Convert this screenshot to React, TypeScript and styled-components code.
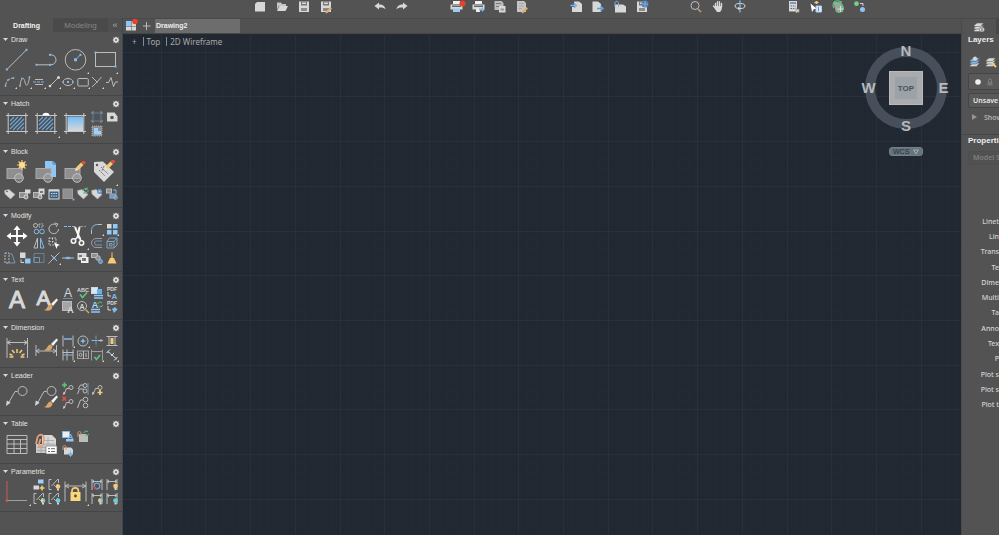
import React from "react";
import styled, { createGlobalStyle } from "styled-components";

const W = "#d8d8d8";
const L = "#bcbcbc";
const B = "#7fb9ee";
const Y = "#f6cb74";
const G = "#5cc47c";
const R = "#e2503c";
const P = "#535353";
const M = "#8f8f8f";

const GlobalStyle = createGlobalStyle`
  * { box-sizing: border-box; }
  html, body, #root { height: 100%; }
  body {
    margin: 0;
    overflow: hidden;
    background: #535353;
    color: #e4e4e4;
    font-family: "Liberation Sans", Arial, sans-serif;
    font-size: 7px;
  }
  button, input, select { font: inherit; color: inherit; }
`;

const Page = styled.div`
  display: flex;
  flex-direction: column;
  height: 100vh;
  min-height: 100%;
`;

const Toolbar = styled.header`
  flex: none;
  height: 18px;
  display: flex;
  justify-content: center;
  gap: 32px;
  padding-left: 120px;
  background: #535353;
`;

const ToolGroup = styled.div`
  display: flex;
`;

const BarButton = styled.button`
  width: 22px;
  height: 14px;
  padding: 0;
  border: 0;
  background: none;
  display: flex;
  justify-content: center;
`;

const Glyph = styled.svg<{ $w: number; $h?: number }>`
  flex: none;
  display: block;
  width: ${(p) => p.$w}px;
  height: ${(p) => p.$h ?? p.$w}px;
  overflow: visible;
  fill: none;
  stroke: ${L};
  stroke-width: 1;
  text { stroke: none; fill: ${W}; font-weight: bold; }
`;

const Body = styled.div`
  flex: 1;
  min-height: 0;
  display: flex;
`;

const Palette = styled.aside`
  flex: none;
  width: 123px;
  background: #535353;
  border-right: 1px solid #414850;
`;

const PaletteTabs = styled.div`
  display: grid;
  grid-template-columns: 53px 55px 1fr;
  height: 14px;
`;

const PaletteTab = styled.button<{ $active?: boolean }>`
  padding: 2px 0 0;
  border: 0;
  line-height: 12px;
  font-size: ${(p) => (p.$active ? 7 : 8)}px;
  font-weight: ${(p) => (p.$active ? "bold" : "normal")};
  color: ${(p) => (p.$active ? "#f4f4f4" : "#858585")};
  background: ${(p) => (p.$active ? "#535353" : "#4a4a4a")};
`;

const Collapse = styled.button`
  padding: 0;
  border: 0;
  font-size: 9px;
  line-height: 12px;
  color: #a8a8a8;
  background: #4f4f4f;
`;

const Section = styled.section`
  padding-bottom: 4px;
  border-bottom: 1px solid #454545;
`;

const SectionHead = styled.div`
  height: 14px;
  display: flex;
  align-items: center;
  gap: 3px;
  padding: 1px 2px 0 3px;
`;

const SectionTitle = styled.h2`
  flex: 1;
  margin: 0;
  font-size: 7px;
  line-height: 14px;
  font-weight: normal;
  color: #e2e2e2;
`;

const GearButton = styled.button`
  padding: 0;
  border: 0;
  background: none;
`;

const ToolGrid = styled.div<{ $rows: number }>`
  display: grid;
  grid-template-columns: repeat(8, 1fr);
  grid-template-rows: 14px 15px ${(p) => (p.$rows === 3 ? "16px" : "")};
  padding: 0 3px;
`;

const ToolButton = styled.button<{ $col: number; $row: number; $big: boolean }>`
  grid-column: ${(p) => p.$col} / span ${(p) => (p.$big ? 2 : 1)};
  grid-row: ${(p) => p.$row} / span ${(p) => (p.$big ? 2 : 1)};
  min-width: 0;
  min-height: 0;
  padding: 0;
  border: 0;
  background: none;
  display: flex;
  align-items: flex-start;
  justify-content: flex-start;
`;

const Workspace = styled.main`
  flex: 1;
  min-width: 0;
  display: flex;
  flex-direction: column;
`;

const DocTabs = styled.div`
  flex: none;
  height: 16px;
  display: flex;
  align-items: stretch;
  background: #515151;
  border-top: 1px solid #494949;
  border-bottom: 1px solid #454545;
`;

const DocButton = styled.button`
  width: 16px;
  padding: 0;
  border: 0;
  background: none;
  display: flex;
  align-items: center;
  justify-content: center;
`;

const DocTab = styled.button`
  width: 85px;
  padding: 0 1px;
  border: 0;
  text-align: left;
  font-size: 7px;
  font-weight: bold;
  line-height: 14px;
  color: #ececec;
  background: #6d6d6d;
`;

const Canvas = styled.div`
  position: relative;
  flex: 1;
  min-height: 0;
  overflow: hidden;
  background: #212831;
`;

const GridDrawing = styled.svg`
  position: absolute;
  inset: 0;
  width: 100%;
  height: 100%;
`;

const ViewLabels = styled.div`
  position: absolute;
  top: 3px;
  left: 9px;
  display: flex;
  align-items: center;
  gap: 6px;
  font-family: "Noto Sans", sans-serif;
  font-size: 8px;
  line-height: 10px;
  color: #a8a9ab;
`;

const ViewLabel = styled.button<{ $bar?: boolean }>`
  padding: 0 0 0 ${(p) => (p.$bar ? 3 : 0)}px;
  border: 0;
  border-left: ${(p) => (p.$bar ? "1px solid #858a90" : "0")};
  background: none;
  line-height: 9px;
`;

const ViewCube = styled.div`
  position: absolute;
  top: 4px;
  right: 11px;
  width: 88px;
  display: flex;
  flex-direction: column;
  align-items: center;
  gap: 8px;
`;

const WcsButton = styled.button`
  width: 34px;
  height: 9px;
  padding: 0 3px;
  border: 1px solid #71808b;
  border-radius: 3px;
  background: #66737d;
  color: #262e36;
  font-size: 7px;
  line-height: 7px;
  display: flex;
  align-items: center;
  justify-content: space-between;
`;

const Inspector = styled.aside`
  flex: none;
  width: 38px;
  overflow: hidden;
  background: #535353;
  border-left: 1px solid #474b50;
  border-top: 1px solid #484848;
  font-family: "Noto Sans", sans-serif;
  font-size: 7px;
  white-space: nowrap;
`;

const InspectorTabs = styled.div`
  height: 15px;
  display: flex;
  background: #484848;
`;

const InspectorTab = styled.button`
  width: 34px;
  padding: 0;
  border: 0;
  background: #535353;
  display: flex;
  align-items: center;
  justify-content: center;
`;

const PanelTitle = styled.h2`
  margin: 0;
  padding-left: 6px;
  font-family: "Liberation Sans", Arial, sans-serif;
  font-size: 8px;
  line-height: 12px;
  font-weight: bold;
  color: #ededed;
`;

const LayerTools = styled.div`
  height: 27px;
  display: flex;
  align-items: center;
  gap: 2px;
  padding: 4px 0 0 6px;
`;

const LayerTool = styled.button`
  width: 14px;
  flex: none;
  padding: 0;
  border: 0;
  background: none;
  display: flex;
  justify-content: center;
`;

const Field = styled.button<{ $h: number; $dim?: boolean }>`
  width: 44px;
  height: ${(p) => p.$h}px;
  margin: 0 0 3px 6px;
  padding: 0 4px;
  border: 1px solid ${(p) => (p.$dim ? "#4e4e4e" : "#454545")};
  border-radius: 2px;
  background: ${(p) => (p.$dim ? "#515151" : "#595959")};
  color: ${(p) => (p.$dim ? "#808080" : "#e6e6e6")};
  font-size: 7px;
  font-weight: 600;
  line-height: 10px;
  display: flex;
  align-items: center;
  gap: 5px;
`;

const ShowRow = styled.button`
  height: 12px;
  margin-bottom: 11px;
  padding: 0 0 0 9px;
  border: 0;
  background: none;
  display: flex;
  align-items: center;
  gap: 7px;
  font-weight: 600;
  color: #b4b4b4;
`;

const LayersPanel = styled.section`
  border-bottom: 1px solid #454545;
`;

const PropertiesPanel = styled.section`
  display: flex;
  flex-direction: column;
  gap: 4px;
`;

const PropertyList = styled.ul`
  height: 199px;
  margin: 42px 0 0;
  padding: 0;
  list-style: none;
  display: grid;
  grid-template-rows: repeat(13, 1fr);
  align-items: center;
  justify-items: end;
  font-weight: 500;
  line-height: 10px;
  color: #d4d4d4;
`;

/* ---------- shared drawing parts ---------- */

const Dot = ({ x, y, s = 2 }: { x: number; y: number; s?: number }) => (
  <rect x={x - s / 2} y={y - s / 2} width={s} height={s} fill={B} stroke="none" />
);
const Brush = () => (
  <g stroke="none">
    <path d="M25.5 8.5L20 14l2 2L27 10z" fill="#f2f2f2" />
    <path d="M19.5 14.5c-3 0-3 5-6.5 5.5 4 1.5 8 1 8.5-3.5z" fill="#d9a566" />
  </g>
);
const Pencil = ({ x, y }: { x: number; y: number }) => (
  <g stroke="none" transform={`translate(${x} ${y})`}>
    <path d="M0 10L1 6.5 3.5 9z" fill="#f0e6d0" />
    <path d="M1 6.5L6 1.5 8.5 4l-5 5z" fill={Y} />
    <path d="M6 1.5L7.5 0h2l1 1v1L8.5 4z" fill={R} />
  </g>
);
const Bulb = ({ x, y, c }: { x: number; y: number; c: string }) => (
  <g stroke="none">
    <circle cx={x} cy={y} r="2.3" fill={c} />
    <rect x={x - 1} y={y + 2} width="2" height="2" fill={W} />
  </g>
);
const Frame = () => <path d="M5.2 3v21M22.8 3v21M3 5.5h22M3 21.5h22" stroke="#c8c8c8" />;
const Hatching = () => (
  <>
    <rect x="6.5" y="7" width="15" height="13" fill="#454d55" stroke="none" />
    <path d="M7 11l4-4M7 15l8-8M7 19l12-12M10 20L21 9M14 20l7-7M18 20l3-3" stroke="#73a6d4" strokeWidth="1.2" />
  </>
);
const BlockShape = () => (
  <>
    <rect x="4" y="10.5" width="15" height="10" fill={M} stroke="#a9a9a9" />
    <circle cx="16" cy="20" r="4.3" fill="#a0a0a080" stroke="#c4c4c4" />
  </>
);
const MiniBlock = () => (
  <>
    <rect x="1.5" y="5.5" width="8" height="5" fill={M} stroke={L} />
    <circle cx="8" cy="10" r="2" fill={M} stroke={W} />
  </>
);
const MiniTag = () => <path d="M1.5 3.5L6 2.5l6 5-4.5 4.5-5.5-5z" fill={W} stroke="#a8a8a8" strokeWidth=".6" />;
const MiniLeader = ({ children }: { children?: React.ReactNode }) => (
  <>
    <path d="M3 12.5l2.5-6H8" />
    <path d="M2 13l.5-3 2 1z" fill={W} stroke="none" />
    <circle cx="10" cy="5.5" r="2" />
    {children}
  </>
);
const BigLeader = () => (
  <>
    <path d="M5.5 21L12 9.5h2.5" />
    <path d="M3 24l.8-5.5 3.8 2.2z" fill={W} stroke="none" />
    <circle cx="19.5" cy="9" r="4.5" />
  </>
);
const MiniConstraint = () => <path d="M4.5 1.5H2v10h2.500M4.5 8L10 2M7 7l1.500 1.500L11 6M10 1.500h1.500V5" />;
const MiniDim = () => <path d="M2 1v11M12 1v11M2 3.5h10M4 2L2 3.5 4 5M10 2l2 1.5L10 5" />;

/* ---------- palette icons ---------- */

const icons: Record<string, React.ReactNode> = {
  line: <><path d="M3.8 23.5L23.5 3.8" /><Dot x={3.8} y={23.5} /><Dot x={23.5} y={3.8} /></>,
  polyline: <><path d="M4.5 18.8h14.500a5 5 0 0 0 0-10h-1.500" /><Dot x={4.5} y={18.8} /><Dot x={18} y={18.8} /><Dot x={18} y={8.8} /></>,
  circle: <><circle cx="14.5" cy="13.8" r="10.3" /><path d="M14.5 13.8l5-5" stroke={B} /><Dot x={14.5} y={13.8} s={3} /><Dot x={19.5} y={8.8} /></>,
  rectangle: <><rect x="5.5" y="6.5" width="20" height="14" /><Dot x={5.5} y={6.5} /><Dot x={25.5} y={20.5} /></>,
  arc: <><path d="M2.5 11C3 6 6 3 10.500 3" strokeDasharray="4 1" /><Dot x={2.5} y={11} s={1.6} /><Dot x={5} y={5} s={1.6} /><Dot x={10.5} y={3} s={1.6} /></>,
  spline: <><path d="M2 11C3 1 6 2 7 7s3 5 4.500-5" /><Dot x={2} y={11} s={1.6} /><Dot x={4} y={3.5} s={1.6} /><Dot x={11.5} y={2} s={1.6} /></>,
  construction: <><path d="M3 4.500h8M3 9.500h8" /><path d="M1 7h12" stroke={B} strokeDasharray="3 1" /></>,
  ray: <><path d="M3 11l8-8" /><circle cx="3" cy="11" r="1.3" fill={W} stroke="none" /><circle cx="11.5" cy="2.5" r="1.5" fill={W} stroke="none" /></>,
  ellipse: <><ellipse cx="7" cy="7" rx="5" ry="3.5" /><Dot x={2} y={7} s={1.5} /><Dot x={7} y={7} /><Dot x={7} y={3.5} s={1.5} /><Dot x={12} y={7} s={1.5} /></>,
  slot: <rect x="1.8" y="3.5" width="10.5" height="7.5" rx="1" />,
  divide: <><path d="M2 2l5 5 4.500-5M7 7l-5 5" /><Dot x={7} y={7} s={1.5} /></>,
  breakline: <path d="M1 7.500h2.500L6 2.500l2.500 9 2-4.500H13" />,
  hatch: <><Hatching /><Frame /></>,
  boundary: <><Hatching /><Frame /><path d="M10.5 5.5a3.500 2.800 0 0 1 7 0z" fill="#fff" stroke="none" /></>,
  gradient: (
    <>
      <defs><linearGradient id="fade" x1="0" y1="0" x2="0" y2="1"><stop offset="0" stopColor="#74b9f3" /><stop offset="1" stopColor="#d5d9dc" /></linearGradient></defs>
      <rect x="6.5" y="6.5" width="15.5" height="14.5" fill="url(#fade)" stroke="none" /><Frame />
    </>
  ),
  region: <><rect x="3" y="3" width="8" height="8" stroke="#5f7f9e" /><path d="M1 3h2M3 1v2M11 1v2M11 3h2M1 11h2M3 11v2M11 11v2M11 11h2" stroke="#8799aa" /></>,
  wipeout: <><path d="M2 2.5h7.500l3 4V11.500H2z" fill={W} stroke="none" /><circle cx="7" cy="7.5" r="1.8" fill="#555" stroke="none" /></>,
  hatchEdit: <><rect x="2" y="2" width="10" height="10" fill={M} stroke="#aaa" strokeDasharray="1 1" /><path d="M4 4h4v3h3v3.500H4z" fill="#9ed0fb" stroke="none" /></>,

  blockCreate: <><BlockShape /><path d="M19 2v10M14 7h10M15.500 3.500l7 7M22.500 3.500l-7 7" stroke={Y} strokeWidth="1.2" /><circle cx="19" cy="7" r="3" fill="#ffdc91" stroke="none" /></>,
  blockInsert: <><path d="M13 3h8l3 3v13H13z" fill="#8ec7f5" stroke="none" /><path d="M21 3v3h3" stroke="#4f80aa" /><BlockShape /></>,
  blockEdit: <><BlockShape /><Pencil x={14} y={3} /></>,
  attributes: <><path d="M4 4l9-.5L24 14 14 24 4 14z" fill={W} stroke="none" /><circle cx="7" cy="7" r="1.2" fill="#555" stroke="none" /><path d="M11 9l7 7M9 12l6 6M14 8l-2 5" stroke="#777" strokeDasharray="2 1" /><Pencil x={14.5} y={2} /></>,
  tag: <><MiniTag /><circle cx="4" cy="4.5" r=".8" fill={P} stroke="none" /></>,
  blockBase: <><MiniBlock /><rect x="7" y="2.5" width="5.5" height="4" fill={W} stroke="none" /></>,
  blockSave: <><MiniBlock /><rect x="6.5" y="1.5" width="6" height="6" fill={W} stroke="none" /><rect x="8" y="4" width="3" height="2" fill="#777" stroke="none" /></>,
  blockTable: <><rect x="2" y="3" width="10" height="9" fill="#42607b" stroke={W} /><path d="M2 3.500h10" stroke={W} strokeWidth="2" /><path d="M4 6.500h6M4 9h6" stroke="#c2e2fb" strokeDasharray="1.5 .8" /></>,
  blockFill: <><rect x="2" y="2" width="9.5" height="9.5" fill={M} stroke="#9c9c9c" /><Dot x={12.5} y={12.5} s={1.8} /></>,
  attSync: <><MiniTag /><path d="M7 4a2.500 2.500 0 0 1 4-2M12 3a2.500 2.500 0 0 1-4 2.500M11 .5v2H9M8 7V5h2" stroke={G} /></>,
  attManage: <><MiniTag /><circle cx="9.5" cy="4.5" r="2.5" fill="#609cd3" stroke="none" /><circle cx="9.5" cy="4.5" r=".8" fill={W} stroke="none" /></>,
  blockReplace: <><rect x="1.5" y="2" width="5" height="4" fill={M} /><path d="M8 3h3v3" stroke={B} /><rect x="5" y="7" width="6" height="4" fill={M} stroke={B} /><circle cx="10.5" cy="10.5" r="1.8" stroke={B} /></>,

  move: <><path d="M14 5v18M5 14h18" stroke="#fff" strokeWidth="1.8" /><path d="M14 3.500l3.500 4.500h-7zM14 24.500l3.500-4.500h-7zM3.500 14L8 10.500v7zM24.500 14L20 10.500v7z" fill="#fff" stroke="none" /></>,
  copy: <><circle cx="3.5" cy="3.5" r="2" /><rect x="7" y="2" width="4" height="3" strokeDasharray="1.5 1" /><circle cx="4.5" cy="9.5" r="2.3" stroke={B} /><circle cx="10" cy="9.5" r="2.3" stroke={B} /></>,
  rotate: <><path d="M9.5 3A4.800 4.800 0 1 0 11.500 7" /><path d="M7.500 1l3.500 1-2 3" /></>,
  mirror: <><path d="M5.500 2v10H2z" /><path d="M8.500 2v10H12z" stroke={B} /></>,
  array: <><path d="M2 2h7v7H2z" stroke={W} strokeDasharray="1.5 1.2" /><path d="M2 5.500h6M5.500 2v6" stroke={W} strokeDasharray="1.5 1.5" /><path d="M7 6.500l6 2.500-2.500 1L9.500 13z" fill="#fff" stroke="none" /></>,
  trim: <><path d="M3 4.500h11" stroke={B} strokeDasharray="3 1" /><path d="M18 4.500h7" stroke="#999" strokeDasharray="4 1" /><path d="M14 5l5 12M18.500 5L16.500 16" stroke="#f5f5f5" strokeWidth="2" /><circle cx="12.5" cy="19" r="2.2" stroke="#f5f5f5" strokeWidth="1.6" /><circle cx="20.5" cy="21" r="2.2" stroke="#f5f5f5" strokeWidth="1.6" /><path d="M18 14l-4 3.500M18 14l2 5" stroke="#f5f5f5" strokeWidth="1.6" /></>,
  fillet: <><path d="M1.500 12V9" /><path d="M1.500 9c0-4 2-6.500 6.500-6.500" stroke={B} /><path d="M8 2.500h4" /></>,
  explode: <g stroke="none"><rect x="2" y="2" width="4.5" height="4.5" fill={W} /><rect x="8" y="2" width="4.5" height="4.5" fill="#8fc8fa" /><rect x="2" y="8" width="4.5" height="4.5" fill="#8fc8fa" /><rect x="8" y="8" width="4.5" height="4.5" fill="#8fc8fa" /></g>,
  offset: <><path d="M12 2.500H6a4.500 4.500 0 0 0 0 9h6" stroke="#9c9c9c" /><path d="M12 5H6.500a2 2 0 0 0 0 4H12" stroke="#7397b8" /></>,
  join: <><path d="M2 5.500h7v6.500H2zM2 5.500l2.500-3.500H12v7l-3 3M9 5.500L12 2" stroke="#7da7cc" /><path d="M4.500 7.500H7V10H4.500z" stroke="#9c9c9c" /></>,
  stretch: <><path d="M2 2h4v10H2z" strokeDasharray="2 1" /><path d="M6 3h3l3 9H5" stroke="#7397b8" /></>,
  scaleCopy: <g stroke="none"><rect x="2" y="1.5" width="5.5" height="5.5" fill={W} /><rect x="7" y="7.5" width="5.5" height="5" fill="#8fc8fa" /><path d="M3 8.500v3h3" stroke={W} /></g>,
  scale: <><path d="M2 2.500h10v9H2z" stroke="#65829d" /><path d="M2 6.500h5.500v5H2z" stroke="#7397b8" /></>,
  extend: <><path d="M1.500 12.500L6 8M8 6l4.500-4.500" /><path d="M4 4l6 6" /><Dot x={7} y={7} s={2.5} /></>,
  breakAt: <><path d="M1 7h12" /><path d="M4 7h6" stroke={B} strokeWidth="1.2" /><Dot x={7} y={7} s={2.5} /></>,
  order: <g stroke="none"><rect x="1.5" y="2" width="9" height="7" fill={W} /><rect x="5" y="6" width="7.5" height="6" fill="#efefef" /><path d="M6 7h4v3H6z" fill="#777" /><path d="M3 4h3v2H3z" fill="#777" /></g>,
  copyNested: <><rect x="1.5" y="2.5" width="6" height="4" fill={M} /><circle cx="8" cy="7" r="2.3" fill={M} /><circle cx="10.5" cy="10.5" r="2" fill="#6d8ba8" stroke={B} /></>,
  purge: <g stroke="none"><path d="M6.500 1h1l.5 6H6z" fill="#d29c56" /><path d="M5 7h4l2.500 5.500h-9z" fill={Y} /></g>,

  text: <text x="14" y="22" fontSize="24" textAnchor="middle" style={{ fontWeight: 400, stroke: W }}>A</text>,
  textStyle: <><text x="11.5" y="18.5" fontSize="21" textAnchor="middle" style={{ fontWeight: 400, stroke: W }}>A</text><g transform="translate(-1 4)"><Brush /></g></>,
  singleText: <><text x="7" y="10.5" fontSize="12" textAnchor="middle" style={{ fontWeight: 400 }}>A</text><path d="M2 12.500h10" stroke={B} strokeWidth=".6" /></>,
  spell: <><text x="7" y="5.5" fontSize="5.5" textAnchor="middle">ABC</text><path d="M4 8.500L6.500 11.500 11 6.500" stroke={G} strokeWidth="1.7" /></>,
  textAlign: <><rect x="1.5" y="1.5" width="6" height="6" fill="#d4e9fa" stroke={W} /><rect x="7" y="3" width="5" height="5" fill="#6eaee8" stroke="none" /><path d="M4 9.500h9M4 12h9" stroke="#8fc8fa" strokeWidth="1.6" /></>,
  pdfText: <><text x="7" y="4.5" fontSize="5" textAnchor="middle">PDF</text><path d="M3 6v4h3" stroke={W} /><text x="9.5" y="13" fontSize="8" textAnchor="middle" style={{ fill: B }}>A</text></>,
  textBox: <><rect x="1.5" y="1.5" width="9" height="9" fill="#a5a5a5" /><text x="9.5" y="13" fontSize="9" textAnchor="middle">A</text></>,
  find: <><circle cx="6" cy="6" r="4.5" /><text x="6" y="8.5" fontSize="7" textAnchor="middle">A</text><path d="M9.500 9.500l3.500 3.500" stroke="#dba766" strokeWidth="1.4" /></>,
  textUpdate: <><text x="5" y="8" fontSize="9" textAnchor="middle" style={{ fill: "#a9d4f8" }}>A</text><path d="M1 9.500h9M1 12h9" stroke="#8fc8fa" strokeWidth="1.6" /><path d="M8 4a2.200 2.200 0 0 1 4-1M12.500 5a2.200 2.200 0 0 1-4 1" stroke={G} /></>,
  pdfSettings: <><text x="7" y="4.5" fontSize="5" textAnchor="middle">PDF</text><path d="M3 6v4h3" stroke={W} /><path d="M7 9l3-2 2.500 2.500-3.500 3.500z" fill={B} stroke="none" /></>,

  dimension: <><path d="M4 4v20M24.500 4v20M4 8.500h20.500M7.500 6.500L4 8.500l3.500 2M21 6.500l3.500 2-3.500 2" /><path d="M14 15v4M9 16l2.500 3M19 16l-2.500 3M6.500 20l3 1.500M21.500 20l-3 1.500M6.500 23h4M17.500 23h4" stroke={Y} strokeWidth="1.5" /></>,
  dimStyle: <><path d="M4 11v11M24.500 11v11M4 17h20.500M7.500 15L4 17l3.500 2M21 15l3.500 2-3.500 2" /><g transform="translate(-1 -4)"><Brush /></g></>,
  linear: <><path d="M2 1.500v11M12 1.500v11" /><path d="M3 5h8" stroke={B} strokeWidth="1.5" /></>,
  diameter: <><circle cx="7" cy="7" r="5" /><path d="M4.500 7h5M7 4.500v5" stroke={B} /><circle cx="7" cy="7" r="1.5" fill={B} stroke="none" /></>,
  ordinate: <><path d="M6 1.500v11" stroke="#7397b8" strokeDasharray="4 1" /><path d="M1.500 6.500h6" stroke={B} /><path d="M8 6.500h5M11 5v3" /></>,
  dimSpace: <><path d="M1.500 2.500h11M1.500 11.500h11M4 2v10M10 2v10" /><path d="M7 4v6" stroke={Y} strokeWidth="3" /></>,
  baseline: <><path d="M2 1.500v11M6 1.500v11M12 1.500v11M1.500 4.500h11" /><path d="M2 7h10" stroke={B} /></>,
  tolerance: <><rect x="1.5" y="3" width="11" height="7.5" stroke="#a5a5a5" /><circle cx="4.5" cy="6.8" r="1.5" /><path d="M7.500 3v7.500M10 5v4" /></>,
  dimCheck: <><path d="M1.500 1.500v11M12.500 1.500v11M1.500 3.500h11" stroke="#9c9c9c" /><path d="M4.500 9l2 2.500L10 7" stroke={G} strokeWidth="1.7" /></>,
  dimBreak: <><path d="M1.500 5L5 1.500M9 12.500L12.500 9M3 3.500l8 7" stroke={W} /><path d="M6 8l3-3" stroke={W} /><Dot x={3} y={4} /><Dot x={11} y={10.5} /></>,

  leader: <BigLeader />,
  leaderStyle: <><BigLeader /><g transform="translate(-1 5)"><Brush /></g></>,
  leaderAdd: <MiniLeader><path d="M1 3h5M3.500 .5v5" stroke={G} strokeWidth="1.7" /></MiniLeader>,
  leaderAlign: <><path d="M1.500 12L3.500 7h4M2 7l2.500-4H8" /><circle cx="9" cy="3.5" r="2" /><circle cx="9" cy="9" r="2" /><path d="M12 1v12" stroke="#7397b8" /></>,
  leaderBreak: <MiniLeader><path d="M10 8v5M7.500 10.500h5" stroke={Y} strokeWidth="1.7" /></MiniLeader>,
  leaderRemove: <MiniLeader><path d="M1.500 .8l3.500 4M5 .8l-3.500 4" stroke={R} strokeWidth="1.5" /></MiniLeader>,
  leaderCollect: <><path d="M1.500 12l3-8H7" /><circle cx="9.5" cy="3.5" r="2.3" /><circle cx="9.5" cy="9.5" r="2.3" /></>,

  table: <path d="M4 5.500h20v18H4zM4 9.500h20M4 14h20M4 18.500h20M11 9.500v14M17.500 9.500v14" />,
  dataLink: <><path d="M10 5h10l4 4v10H10z" fill={W} stroke="none" /><path d="M4 14h20v9H4z" fill="#c9c9c9" stroke="none" /><path d="M5 17.500h10M5 20.500h10M12 10.500h10M12 14h11M16 7v8M9 15v8" stroke="#9d9d9d" strokeWidth=".7" /><path d="M5 10c0-7 8-7 7 0l-1 5c-1 3-5 2-4-1l1.500-5M5 10l-1 4" stroke="#dfa27b" strokeWidth="1.8" /><rect x="14" y="16" width="11" height="8" fill="#fff" stroke="#666" strokeWidth=".6" /><path d="M16 18.700h2M19 18.700h4M16 21.500h2M19 21.500h4" stroke="#666" /></>,
  tableText: <><rect x="1.5" y="1.5" width="7" height="6" fill="#eee" stroke={B} /><text x="9.5" y="8.5" fontSize="8" textAnchor="middle" style={{ fill: B }}>A</text><rect x="5" y="9" width="7.5" height="2.5" fill="#8fc8fa" stroke="none" /></>,
  tableUpdate: <><path d="M3 4h7l2 2v6H3z" fill={L} stroke="none" /><path d="M2 7V3c0-2 3-2 3 0v3" stroke="#d49a78" /><path d="M8 3a2.200 2.200 0 0 1 4-1M12.500 4a2.200 2.200 0 0 1-4 1" stroke={G} /></>,
  tableExport: <><path d="M3 3.500h7l2 2v5H3z" fill={W} stroke="none" /><path d="M2 6V3c0-2 3-2 3 0v3" stroke="#d49a78" /><path d="M9.500 6.500v3M7.500 9.500l2 3 2-3z" fill={B} stroke={B} /></>,

  coincident: <><path d="M4 3v20" stroke="#c65860" /><path d="M4 22.500h20" stroke="#a0a0a0" /><circle cx="4" cy="22.5" r="1.5" fill="#c65860" stroke="none" /></>,
  autoConstrain: <g stroke="none"><rect x="6" y="1.5" width="5.5" height="4" fill="#9fd0fa" /><rect x="1.5" y="7.5" width="5.5" height="4" fill={W} /><path d="M10 7.500v5M7.500 10h5" stroke={Y} strokeWidth="1.6" /></g>,
  showConstraint: <><MiniConstraint /><Bulb x={11} y={8.5} c={Y} /></>,
  showSome: <><MiniConstraint /><Bulb x={11} y={8.5} c="#76cdd8" /><path d="M11 6.200a2.300 2.300 0 0 0 0 4.600z" fill={Y} stroke="none" /></>,
  hideConstraint: <><MiniConstraint /><Bulb x={11} y={8.5} c="#69cfe2" /></>,
  dimConstraint: <><path d="M4 3.500v20M25 3.500v20M4 8h21M8 6L4 8l4 2M21 6l4 2-4 2" /><path d="M11 16v-3a3.200 3.200 0 0 1 6.400 0v3" stroke={Y} strokeWidth="1.7" /><rect x="9.5" y="14" width="10" height="9" fill="#f9d77f" stroke="none" /><circle cx="14.5" cy="18" r="1.4" fill="#5b4b2a" stroke="none" /></>,
  convertDim: <><MiniDim /><circle cx="7" cy="8" r="2.8" stroke="#6aa7df" strokeWidth="1.3" /><path d="M4.200 8A2.800 2.800 0 0 0 7 10.800" stroke={R} strokeWidth="1.3" /></>,
  dimShow: <><MiniDim /><Bulb x={10.5} y={8} c={Y} /></>,
  dimShowSome: <><MiniDim /><Bulb x={10.5} y={8.5} c="#76cdd8" /><path d="M10.500 6.200a2.300 2.300 0 0 0 0 4.600z" fill={Y} stroke="none" /></>,
  dimHide: <><MiniDim /><Bulb x={10.5} y={8.5} c="#69cfe2" /></>,
};

type Tool = [name: string, col: number, row: number, size?: "big" | "", more?: boolean];

const sections: { title: string; rows: number; tools: Tool[] }[] = [
  { title: "Draw", rows: 3, tools: [
    ["line", 1, 1, "big"], ["polyline", 3, 1, "big"], ["circle", 5, 1, "big", true], ["rectangle", 7, 1, "big", true],
    ["arc", 1, 3, "", true], ["spline", 2, 3, "", true], ["construction", 3, 3, "", true], ["ray", 4, 3, "", true],
    ["ellipse", 5, 3, "", true], ["slot", 6, 3, "", true], ["divide", 7, 3, "", true], ["breakline", 8, 3]] },
  { title: "Hatch", rows: 2, tools: [
    ["hatch", 1, 1, "big"], ["boundary", 3, 1, "big", true], ["gradient", 5, 1, "big"],
    ["region", 7, 1], ["wipeout", 8, 1], ["hatchEdit", 7, 2]] },
  { title: "Block", rows: 3, tools: [
    ["blockCreate", 1, 1, "big"], ["blockInsert", 3, 1, "big"], ["blockEdit", 5, 1, "big"], ["attributes", 7, 1, "big", true],
    ["tag", 1, 3], ["blockBase", 2, 3], ["blockSave", 3, 3], ["blockTable", 4, 3],
    ["blockFill", 5, 3], ["attSync", 6, 3], ["attManage", 7, 3], ["blockReplace", 8, 3]] },
  { title: "Modify", rows: 3, tools: [
    ["move", 1, 1, "big"], ["copy", 3, 1], ["rotate", 4, 1], ["mirror", 3, 2], ["array", 4, 2],
    ["trim", 5, 1, "big", true], ["fillet", 7, 1, "", true], ["explode", 8, 1, "", true], ["offset", 7, 2], ["join", 8, 2],
    ["stretch", 1, 3], ["scaleCopy", 2, 3], ["scale", 3, 3], ["extend", 4, 3, "", true],
    ["breakAt", 5, 3], ["order", 6, 3], ["copyNested", 7, 3], ["purge", 8, 3]] },
  { title: "Text", rows: 2, tools: [
    ["text", 1, 1, "big"], ["textStyle", 3, 1, "big"], ["singleText", 5, 1], ["spell", 6, 1], ["textAlign", 7, 1], ["pdfText", 8, 1],
    ["textBox", 5, 2], ["find", 6, 2], ["textUpdate", 7, 2], ["pdfSettings", 8, 2]] },
  { title: "Dimension", rows: 2, tools: [
    ["dimension", 1, 1, "big"], ["dimStyle", 3, 1, "big"], ["linear", 5, 1, "", true], ["diameter", 6, 1, "", true],
    ["ordinate", 7, 1], ["dimSpace", 8, 1], ["baseline", 5, 2, "", true], ["tolerance", 6, 2],
    ["dimCheck", 7, 2, "", true], ["dimBreak", 8, 2, "", true]] },
  { title: "Leader", rows: 2, tools: [
    ["leader", 1, 1, "big"], ["leaderStyle", 3, 1, "big"], ["leaderAdd", 5, 1], ["leaderAlign", 6, 1], ["leaderBreak", 7, 1],
    ["leaderRemove", 5, 2], ["leaderCollect", 6, 2]] },
  { title: "Table", rows: 2, tools: [
    ["table", 1, 1, "big"], ["dataLink", 3, 1, "big"], ["tableText", 5, 1], ["tableUpdate", 6, 1], ["tableExport", 5, 2]] },
  { title: "Parametric", rows: 2, tools: [
    ["coincident", 1, 1, "big", true], ["autoConstrain", 3, 1], ["showConstraint", 4, 1], ["showSome", 3, 2], ["hideConstraint", 4, 2],
    ["dimConstraint", 5, 1, "big", true], ["convertDim", 7, 1], ["dimShow", 8, 1], ["dimShowSome", 7, 2], ["dimHide", 8, 2]] },
];

const Gear = () => (
  <Glyph $w={8} viewBox="0 0 8 8">
    <circle cx="4" cy="4" r="1.8" stroke="#e0e0e0" strokeWidth="1.8" />
    <path d="M4 .8v1M4 6.200v1M.8 4h1M6.200 4h1M1.700 1.700l.7.7M5.600 5.600l.7.7M6.300 1.700l-.7.7M1.700 6.300l.7-.7" stroke="#e0e0e0" />
  </Glyph>
);

const PaletteSection = ({ title, rows, tools }: (typeof sections)[number]) => (
  <Section>
    <SectionHead>
      <Glyph $w={5} viewBox="0 0 5 5"><path d="M0 1h5L2.500 4z" fill={W} stroke="none" /></Glyph>
      <SectionTitle>{title}</SectionTitle>
      <GearButton aria-label={`${title} settings`}><Gear /></GearButton>
    </SectionHead>
    <ToolGrid $rows={rows}>
      {tools.map(([name, col, row, size, more]) => {
        const s = size === "big" ? 28 : 14;
        return (
          <ToolButton key={name} $col={col} $row={row} $big={size === "big"} aria-label={name}>
            <Glyph $w={s} viewBox={`0 0 ${s} ${s}`}>
              {icons[name]}
              {more && <path d={`M${s} ${s - 2}v2h-2z`} fill={W} stroke="none" />}
            </Glyph>
          </ToolButton>
        );
      })}
    </ToolGrid>
  </Section>
);

/* ---------- top bar icons, 14 x 14 ---------- */

const Floppy = () => (
  <g stroke="none"><path d="M2 1.500h10v10.500H2z" fill={W} /><path d="M4 1.500h6v4H4z" fill="#777" /><path d="M5 2.500h4v1.500H5z" fill={W} /><path d="M4 8h6v3H4z" fill="#8a8a8a" /></g>
);
const Printer = () => (
  <g stroke="none"><path d="M4 1h7v3H4z" fill="#f0f0f0" /><path d="M1.500 4.500h12v5h-12z" fill={W} /><path d="M3 5.500h9v1.500H3z" fill="#666" /></g>
);
const SmallPencil = () => <path d="M7 11.500l4.500-4.500 1.500 1.500-4.500 4.500-2 .5z" fill="#e1aa6d" stroke="none" />;

const barIcons: Record<string, React.ReactNode> = {
  "New": <path d="M2 4l2-2h8v9.500H2z" fill={W} stroke="none" />,
  "Open": <g stroke="none"><path d="M2 2.500h4l1 1.500h4v2H4L2 10z" fill="#c5c5c5" /><path d="M4.500 6h8.500l-2.500 5H2z" fill={W} /></g>,
  "Save": <Floppy />,
  "Save as": <><Floppy /><SmallPencil /></>,
  "Undo": <path d="M1.500 6L6 2.500v2c4 0 6 1.500 6.500 5C11 7.500 9 7.300 6 7.500v2z" fill={W} stroke="none" />,
  "Redo": <path d="M12.500 6L8 2.500v2c-4 0-6 1.500-6.500 5C3 7.500 5 7.300 8 7.500v2z" fill={W} stroke="none" />,
  "Print": <><Printer /><path d="M4 8.500h7V12H4z" fill="#9acbf5" stroke="none" /><circle cx="13.5" cy="3.5" r="3" fill="#e8432a" stroke="none" /></>,
  "Batch print": <><Printer /><path d="M5 8.500h4V12H5z" fill="#eee" stroke="none" /><path d="M8 8.500h3V7l2.500 2.700L11 12v-1.500H8z" fill={B} stroke="none" /></>,
  "Page setup": <g stroke="none"><path d="M1.500 1h7l2 2v7h-9z" fill="#bdbdbd" /><path d="M3 3h5v1H3zM3 6h3v1H3z" fill="#777" /><path d="M6 6h6.500v6.500H6z" fill={W} /><path d="M7.500 8.500h3.500v2H7.500z" fill="#999" /></g>,
  "Sheet edit": <><path d="M2 1h7l2 2v9H2z" fill="#c6c6c6" stroke="none" /><path d="M4 3.500h5M4 6h5M4 8.500h3" stroke="#999" strokeWidth=".7" /><SmallPencil /></>,
  "Import": <><path d="M5 1.500h5l3 2.500v8H3V7h3z" fill={W} stroke="none" /><path d="M1.500 5.500h5M5 3l2.500 2.500L5 8" stroke={B} strokeWidth="1.5" /></>,
  "Export": <><path d="M1.500 1.500H7l3 2.500v8H1.500z" fill={W} stroke="none" /><path d="M6 8.500h5.500M9.500 6L12 8.500 9.500 11" stroke="#5c9fd8" strokeWidth="1.6" /></>,
  "Attach": <><path d="M2 4.500h8l3 2v6H2z" fill={W} stroke="none" /><path d="M2 7V3.500c0-3 3.500-3 3.500 0V7" stroke={B} /></>,
  "Save to web": <><Floppy /><circle cx="10" cy="4" r="3.5" fill="#4e83b5" stroke="none" /><path d="M7 4h6M10 1v6" stroke="#8cbce5" strokeWidth=".7" /></>,
  "Zoom": <><circle cx="6" cy="5.5" r="4" /><path d="M9 9l3 3" stroke="#c9a06b" strokeWidth="1.5" /></>,
  "Pan": <><path d="M4.500 6.500v-3M6.500 6V1.800M8.500 6V1.800M10.500 6.500v-3M2.500 6l2.500 3" stroke={W} strokeWidth="1.4" strokeLinecap="round" /><path d="M4 6h7.200l-.7 4-1.500 2H6l-2-3z" fill={W} stroke="none" /></>,
  "Orbit": <><ellipse cx="7" cy="6" rx="5" ry="2.5" stroke={W} /><path d="M7 .5v12" stroke={B} strokeWidth="1.3" /><path d="M5 7l3 1.500L5 10z" fill={W} stroke="none" /></>,
  "Calculator": <><path d="M2 1h8v10.500H2z" fill={W} stroke="none" /><path d="M3 2h6v2H3z" fill="#799bb8" stroke="none" /><path d="M3.500 6h5M3.500 8.500h4" stroke="#666" strokeDasharray="1.5 .8" /><path d="M8 8l4 4" stroke="#8fb6da" strokeWidth="2" /><path d="M9 12.500l3-3" stroke={Y} strokeWidth="1.5" /></>,
  "Quick select": <><path d="M5.500 2.500h4M7.500 1v3" stroke={Y} strokeWidth="1.4" /><path d="M1.500 3.500L8 9H5l-2 3z" fill="#fff" stroke="none" /><path d="M7 6h5.500v6H7z" fill="#dcebf7" stroke="#a9cdec" /><path d="M9.500 7v4" stroke="#5791c5" /></>,
  "Update": <><path d="M2 2h6l4 3v7H5z" fill="#9ba69e" stroke="none" /><path d="M3 8a4 4 0 0 1 7-5.500M11 5a4 4 0 0 1-6 6M10 1v2.500H7.500" stroke={G} strokeWidth="1.3" /><path d="M9.500 6v6M6.500 9h6" stroke={W} /></>,
  "Match": <><circle cx="3.5" cy="3.7" r="2.4" fill="#79cc8b" stroke="none" /><circle cx="9.5" cy="9.5" r="2.5" fill="#8fc6f7" stroke="none" /><path d="M7 3.500h3V6" stroke={W} /></>,
};

const barGroups = [
  ["New", "Open", "Save", "Save as"],
  ["Undo", "Redo"],
  ["Print", "Batch print", "Page setup", "Sheet edit"],
  ["Import", "Export", "Attach", "Save to web"],
  ["Zoom", "Pan", "Orbit"],
  ["Calculator", "Quick select", "Update", "Match"],
];

/* ---------- drawing area ---------- */

const PITCH = 44.7;
const seq = (n: number) => Array.from({ length: n }, (_, i) => i);
const gridPos = (start: number, i: number) => Math.round(start + (i * PITCH) / 5) + 0.5;
const gridColor = (i: number) => (i % 5 === 0 ? "#28313a" : "#222a33");

const DrawingGrid = () => (
  <GridDrawing aria-hidden="true" shapeRendering="crispEdges">
    {seq(250).map((i) => (
      <line key={i} stroke={gridColor(i)} x1={gridPos(-7, i)} x2={gridPos(-7, i)} y1="0" y2="100%" />
    ))}
    {seq(160).map((i) => (
      <line key={i} stroke={gridColor(i)} y1={gridPos(-27, i)} y2={gridPos(-27, i)} x1="0" x2="100%" />
    ))}
  </GridDrawing>
);

const Compass = () => (
  <Glyph $w={88} $h={101} viewBox="0 0 88 101" role="img" aria-label="View cube">
    <circle cx="44" cy="50" r="36" stroke="#464f5a" strokeWidth="10" />
    <g fontSize="15" textAnchor="middle">
      <text x="44" y="18" style={{ fill: "#b7b9bc" }}>N</text>
      <text x="44" y="93" style={{ fill: "#b7b9bc" }}>S</text>
      <text x="6.5" y="55" style={{ fill: "#b7b9bc" }}>W</text>
      <text x="81.5" y="55" style={{ fill: "#b7b9bc" }}>E</text>
    </g>
    <rect x="27.5" y="33.5" width="33" height="33" fill="#a9abad" stroke="#b7b9bb" />
    <rect x="33" y="39" width="22" height="22" fill="#9ca3a8" stroke="none" />
    <text x="44" y="53" fontSize="8" textAnchor="middle" style={{ fill: "#48515a" }}>TOP</text>
  </Glyph>
);

const LayerStack = ({ accent, badge }: { accent?: string; badge?: React.ReactNode }) => (
  <Glyph $w={12} viewBox="0 0 12 12">
    <g fill={W} stroke="#666" strokeWidth=".6">
      <path d="M1 9.500l3-2.500h6.500L7.500 10.500H1z" />
      <path d="M1 7l3-2.500h6.500L7.500 8H1z" fill={accent ?? W} />
      <path d="M1 4.500L4 2h6.500L7.500 5.500H1z" fill={accent ?? W} />
    </g>
    {badge}
  </Glyph>
);

const propertyLabels = ["Linet", "Lin", "Trans", "Te", "Dime", "Multi", "Ta", "Anno", "Tex", "P", "Plot s", "Plot s", "Plot t"];

export default function App() {
  return (
    <Page>
      <GlobalStyle />
      <Toolbar>
        {barGroups.map((group) => (
          <ToolGroup key={group[0]}>
            {group.map((name) => (
              <BarButton key={name} aria-label={name}>
                <Glyph $w={14} viewBox="0 0 14 14">{barIcons[name]}</Glyph>
              </BarButton>
            ))}
          </ToolGroup>
        ))}
      </Toolbar>
      <Body>
        <Palette>
          <PaletteTabs>
            <PaletteTab $active>Drafting</PaletteTab>
            <PaletteTab>Modeling</PaletteTab>
            <Collapse aria-label="Collapse palette">«</Collapse>
          </PaletteTabs>
          {sections.map((s) => <PaletteSection key={s.title} {...s} />)}
        </Palette>
        <Workspace>
          <DocTabs>
            <DocButton aria-label="Start page">
              <Glyph $w={14} viewBox="0 0 14 14">
                <g stroke="none">
                  <rect x="2" y="2" width="5" height="5" fill="#8fc6f7" /><rect x="7.5" y="2" width="4.5" height="5" fill={W} />
                  <rect x="2" y="7.5" width="5" height="4" fill={W} /><rect x="7.5" y="7.5" width="4.5" height="4" fill={W} />
                  <circle cx="11" cy="2.5" r="2.8" fill="#e8432a" />
                </g>
              </Glyph>
            </DocButton>
            <DocButton aria-label="New drawing">
              <Glyph $w={8} viewBox="0 0 8 8"><path d="M3.500 0v8M0 4h7.500" /></Glyph>
            </DocButton>
            <DocTab>Drawing2</DocTab>
          </DocTabs>
          <Canvas>
            <DrawingGrid />
            <ViewLabels>
              <ViewLabel>+</ViewLabel>
              <ViewLabel $bar>Top</ViewLabel>
              <ViewLabel $bar>2D Wireframe</ViewLabel>
            </ViewLabels>
            <ViewCube>
              <Compass />
              <WcsButton>
                WCS
                <Glyph $w={6} viewBox="0 0 6 6"><path d="M.5 1h5L3 5z" stroke="#9fb0bc" /></Glyph>
              </WcsButton>
            </ViewCube>
          </Canvas>
        </Workspace>
        <Inspector>
          <InspectorTabs>
            <InspectorTab aria-label="Layers and properties">
              <LayerStack badge={<><circle cx="9" cy="8.5" r="2.5" fill={W} stroke="#555" strokeWidth=".5" /><path d="M9 7v3" stroke="#666" /></>} />
            </InspectorTab>
          </InspectorTabs>
          <LayersPanel>
            <PanelTitle>Layers</PanelTitle>
            <LayerTools>
              <LayerTool aria-label="Layer state"><LayerStack accent={B} badge={<circle cx="6" cy="2.5" r="2" fill={W} stroke="none" />} /></LayerTool>
              <LayerTool aria-label="Match layer"><LayerStack badge={<path d="M7 7l4 4" stroke={Y} strokeWidth="2" />} /></LayerTool>
            </LayerTools>
            <Field $h={17} aria-label="Current layer">
              <Glyph $w={8} viewBox="0 0 8 8"><circle cx="5" cy="4" r="2.8" fill="#f0f0f0" stroke="none" /></Glyph>
              <Glyph $w={8} viewBox="0 0 8 8"><path d="M2.500 4V2.500a1.500 1.500 0 0 1 3 0V4" stroke="#828282" /><rect x="1.5" y="4" width="5" height="3.5" fill="#767676" stroke="none" /></Glyph>
            </Field>
            <Field $h={15}>Unsave</Field>
            <ShowRow>
              <Glyph $w={6} viewBox="0 0 6 6"><path d="M1 0l5 3-5 3z" fill="#959595" stroke="none" /></Glyph>
              Show
            </ShowRow>
          </LayersPanel>
          <PropertiesPanel>
            <PanelTitle>Properti</PanelTitle>
            <Field $h={14} $dim>Model S</Field>
            <PropertyList>
              {propertyLabels.map((label, i) => <li key={i}>{label}</li>)}
            </PropertyList>
          </PropertiesPanel>
        </Inspector>
      </Body>
    </Page>
  );
}
